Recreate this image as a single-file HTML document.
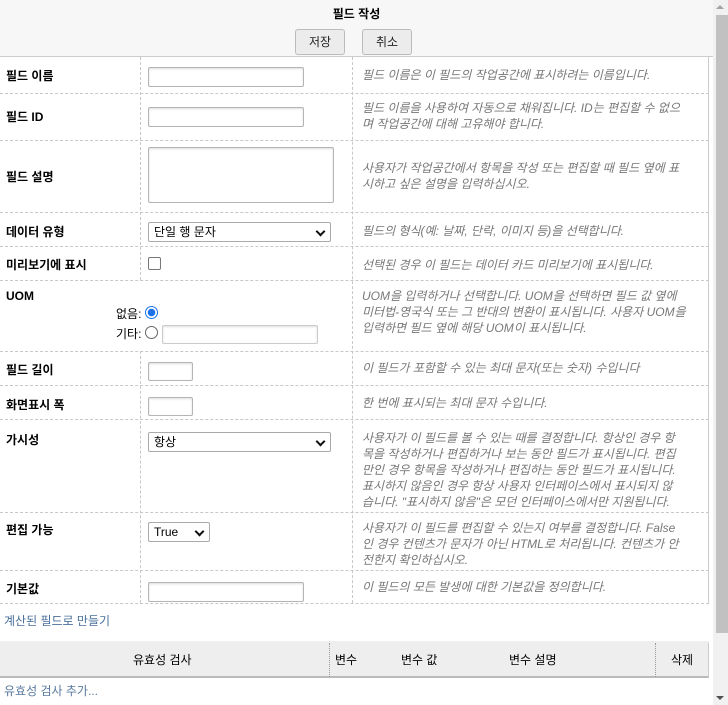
<!DOCTYPE html>
<html><head><meta charset="utf-8"><style>
*{box-sizing:border-box;margin:0;padding:0}
body{width:728px;height:705px;overflow:hidden;background:#fff;font-family:"Liberation Sans","Noto Sans CJK KR",sans-serif;font-size:12px;color:#000;position:relative}
.a{position:absolute}
.hdr{left:0;top:0;width:713px;height:57px;background:#f7f7f7;border-bottom:1px solid #ccc}
.btn{position:absolute;top:29px;width:50px;height:26px;border:1px solid #bbb;border-radius:3px;background:#ececec;font-size:12px;text-align:center;line-height:24px;color:#222}
.hl{position:absolute;left:0;width:709px;border-top:1px dashed #c8c8c8;height:0}
.vl{position:absolute;width:0;border-left:1px dashed #c8c8c8}
.lb{position:absolute;left:6px;font-weight:bold;font-size:12px}
.ds{position:absolute;left:362px;width:345px;color:#777;font-style:italic;font-size:12px;line-height:16px;white-space:nowrap}
.in{position:absolute;border:1px solid #b5b5b5;border-radius:2px;background:#fff;box-shadow:inset 0 1px 2px #ddd}
.sel{position:absolute;border:1px solid #aaa;border-radius:2px;background:#fff;font-size:12px;padding-left:5px;line-height:18px}
.sel:after{content:"";position:absolute;right:6px;top:5px;width:5px;height:5px;border-right:2px solid #111;border-bottom:2px solid #111;transform:rotate(45deg)}
</style></head><body>
<div class="a hdr"></div>
<div class="a" style="left:0;width:713px;top:5px;text-align:center;font-weight:bold;font-size:12px">필드 작성</div>
<div class="btn" style="left:295px">저장</div>
<div class="btn" style="left:362px">취소</div>
<div class="a" style="left:708px;top:57px;height:546px;border-left:1px solid #ccc"></div>

<div class="vl" style="left:140px;top:57px;height:223px"></div>
<div class="vl" style="left:140px;top:351px;height:252px"></div>
<div class="vl" style="left:352px;top:57px;height:546px"></div>
<div class="hl" style="top:93px"></div>
<div class="hl" style="top:140px"></div>
<div class="hl" style="top:212px"></div>
<div class="hl" style="top:246px"></div>
<div class="hl" style="top:280px"></div>
<div class="hl" style="top:351px"></div>
<div class="hl" style="top:385px"></div>
<div class="hl" style="top:419px"></div>
<div class="hl" style="top:512px"></div>
<div class="hl" style="top:570px"></div>
<div class="hl" style="top:603px"></div>

<div class="lb" style="top:67px">필드 이름</div>
<div class="in" style="left:148px;top:67px;width:156px;height:20px"></div>
<div class="ds" style="top:67px">필드 이름은 이 필드의 작업공간에 표시하려는 이름입니다.</div>

<div class="lb" style="top:108px">필드 ID</div>
<div class="in" style="left:148px;top:107px;width:156px;height:20px"></div>
<div class="ds" style="top:100px">필드 이름을 사용하여 자동으로 채워집니다. ID는 편집할 수 없으<br>며 작업공간에 대해 고유해야 합니다.</div>

<div class="lb" style="top:168px">필드 설명</div>
<div class="in" style="left:148px;top:147px;width:186px;height:56px"></div>
<div class="ds" style="top:160px">사용자가 작업공간에서 항목을 작성 또는 편집할 때 필드 옆에 표<br>시하고 싶은 설명을 입력하십시오.</div>

<div class="lb" style="top:223px">데이터 유형</div>
<div class="sel" style="left:148px;top:222px;width:183px;height:20px">단일 행 문자</div>
<div class="ds" style="top:223px">필드의 형식(예: 날짜, 단락, 이미지 등)을 선택합니다.</div>

<div class="lb" style="top:256px">미리보기에 표시</div>
<div class="a" style="left:148px;top:257px;width:13px;height:13px;border:1px solid #777;border-radius:2px"></div>
<div class="ds" style="top:257px">선택된 경우 이 필드는 데이터 카드 미리보기에 표시됩니다.</div>

<div class="lb" style="top:289px">UOM</div>
<div class="a" style="left:116px;top:305px">없음:</div>
<div class="a" style="left:145px;top:306px;width:13px;height:13px;border-radius:50%;border:1px solid #1a73e8;background:radial-gradient(circle,#1a73e8 0 3.5px,#fff 4px)"></div>
<div class="a" style="left:116px;top:325px">기타:</div>
<div class="a" style="left:145px;top:326px;width:13px;height:13px;border-radius:50%;border:1px solid #666"></div>
<div class="in" style="left:162px;top:325px;width:156px;height:19px;border-color:#ccc"></div>
<div class="ds" style="top:288px">UOM을 입력하거나 선택합니다. UOM을 선택하면 필드 값 옆에<br>미터법-영국식 또는 그 반대의 변환이 표시됩니다. 사용자 UOM을<br>입력하면 필드 옆에 해당 UOM이 표시됩니다.</div>

<div class="lb" style="top:361px">필드 길이</div>
<div class="in" style="left:148px;top:362px;width:45px;height:19px"></div>
<div class="ds" style="top:360px">이 필드가 포함할 수 있는 최대 문자(또는 숫자) 수입니다</div>

<div class="lb" style="top:396px">화면표시 폭</div>
<div class="in" style="left:148px;top:397px;width:45px;height:19px"></div>
<div class="ds" style="top:395px">한 번에 표시되는 최대 문자 수입니다.</div>

<div class="lb" style="top:431px">가시성</div>
<div class="sel" style="left:148px;top:432px;width:183px;height:20px">항상</div>
<div class="ds" style="top:430px">사용자가 이 필드를 볼 수 있는 때를 결정합니다. 항상인 경우 항<br>목을 작성하거나 편집하거나 보는 동안 필드가 표시됩니다. 편집<br>만인 경우 항목을 작성하거나 편집하는 동안 필드가 표시됩니다.<br>표시하지 않음인 경우 항상 사용자 인터페이스에서 표시되지 않<br>습니다. "표시하지 않음"은 모던 인터페이스에서만 지원됩니다.</div>

<div class="lb" style="top:521px">편집 가능</div>
<div class="sel" style="left:148px;top:522px;width:62px;height:20px">True</div>
<div class="ds" style="top:520px">사용자가 이 필드를 편집할 수 있는지 여부를 결정합니다. False<br>인 경우 컨텐츠가 문자가 아닌 HTML로 처리됩니다. 컨텐츠가 안<br>전한지 확인하십시오.</div>

<div class="lb" style="top:580px">기본값</div>
<div class="in" style="left:148px;top:582px;width:156px;height:20px"></div>
<div class="ds" style="top:579px">이 필드의 모든 발생에 대한 기본값을 정의합니다.</div>

<div class="a" style="left:4px;top:612px;color:#4a6f9a">계산된 필드로 만들기</div>

<div class="a" style="left:0;top:641px;width:709px;height:37px;background:#eee;border-bottom:2px solid #bbb"></div>
<div class="a" style="left:329px;top:643px;height:34px;border-left:1px dotted #999"></div>
<div class="a" style="left:655px;top:643px;height:34px;border-left:1px dotted #999"></div>
<div class="a" style="left:708px;top:643px;height:34px;border-left:1px solid #ccc"></div>
<div class="a" style="left:133px;top:651px">유효성 검사</div>
<div class="a" style="left:335px;top:651px">변수</div>
<div class="a" style="left:401px;top:651px">변수 값</div>
<div class="a" style="left:509px;top:651px">변수 설명</div>
<div class="a" style="left:671px;top:651px">삭제</div>
<div class="a" style="left:4px;top:682px;color:#5a7a9f">유효성 검사 추가...</div>

<div class="a" style="left:713px;top:0;width:15px;height:705px;background:#f1f1f1"></div>
<div class="a" style="left:716px;top:15px;width:12px;height:618px;background:#c1c1c1"></div>
<div class="a" style="left:716px;top:5px;width:0;height:0;border-left:4px solid transparent;border-right:4px solid transparent;border-bottom:4px solid #a3a3a3"></div>
<div class="a" style="left:716px;top:696px;width:0;height:0;border-left:4px solid transparent;border-right:4px solid transparent;border-top:4px solid #505050"></div>
</body></html>
